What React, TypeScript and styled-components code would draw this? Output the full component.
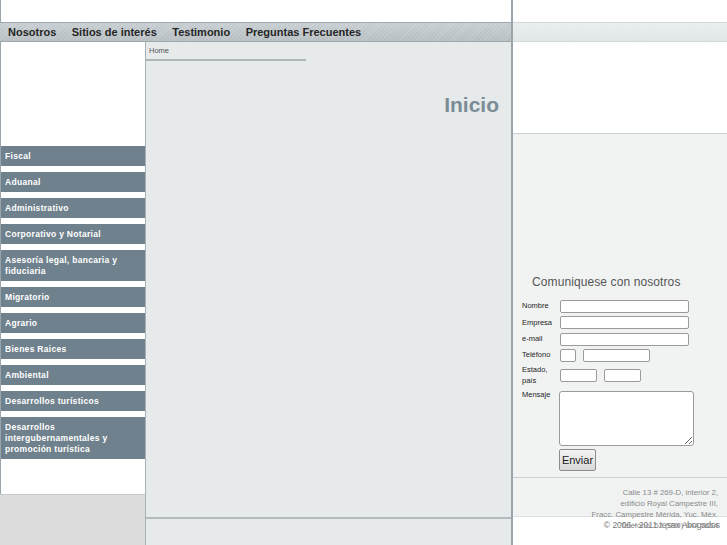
import React, { type FC } from 'react';
import styled, { createGlobalStyle } from 'styled-components';

const COLORS = {
  Line: '#9aa5ab',
  LineSoft: '#c9d1d4',
  Panel: '#e6eaeb',
  PanelLight: '#f1f3f3',
  Menu: '#6f818d',
  Text: '#222',
  Muted: '#8a8a8a',
  Title: '#7b8c96',
};

const GlobalStyle = createGlobalStyle`
  html, body {
    margin: 0;
    padding: 0;
    background: #fff;
  }
  body {
    font-family: "Liberation Sans", Arial, sans-serif;
  }
`;

const Page = styled.div`
  width: 727px;
  height: 545px;
  overflow: hidden;
  display: grid;
  grid-template-columns: 511px 216px;
`;

const Main = styled.div`
  display: grid;
  grid-template-rows: 22px 20px 1fr;
  min-height: 0;
`;

const TopBlank = styled.div`
  border-left: 1px solid ${COLORS.Line};
  background: #fff;
`;

const NavBar = styled.nav<{ $light?: boolean }>`
  box-sizing: border-box;
  height: 20px;
  display: flex;
  align-items: center;
  gap: 15.5px;
  padding-left: 8px;
  border-top: 1px solid ${(p) => (p.$light ? '#d3d9db' : '#9ea8ad')};
  border-bottom: 1px solid ${(p) => (p.$light ? '#d3d9db' : '#9ea8ad')};
  background:
    repeating-linear-gradient(
      135deg,
      rgba(255, 255, 255, 0.14) 0 1px,
      transparent 1px 3px
    ),
    ${(p) =>
      p.$light
        ? 'linear-gradient(#e9edee, #dfe4e6)'
        : 'linear-gradient(#c7ced1, #b6bec2)'};
`;

const NavLink = styled.a`
  font-size: 11px;
  font-weight: bold;
  color: #262626;
  text-decoration: none;
  line-height: 18px;
  white-space: nowrap;
`;

const Body = styled.div`
  display: grid;
  grid-template-columns: 145px 1fr;
  min-height: 0;
`;

const Sidebar = styled.aside`
  display: flex;
  flex-direction: column;
  border-left: 1px solid ${COLORS.Line};
  background: #fff;
`;

const Menu = styled.ul`
  list-style: none;
  margin: 104px 0 0;
  padding: 0;
  display: flex;
  flex-direction: column;
  gap: 6px;
`;

const MenuItem = styled.li`
  background: ${COLORS.Menu};
  color: #fff;
  font-size: 8.5px;
  font-weight: bold;
  letter-spacing: 0.3px;
  line-height: 11px;
  padding: 5px 20px 4px 4px;
`;

const SideFill = styled.div`
  flex: 1;
`;

const SideBottom = styled.div`
  height: 50px;
  background: #dcdcdc;
  border-top: 1px solid #c4cbce;
  margin-left: -1px;
`;

const Content = styled.section`
  display: flex;
  flex-direction: column;
  background: ${COLORS.Panel};
  border-left: 1px solid #a7b1b6;
`;

const Breadcrumb = styled.div`
  width: 157px;
  height: 13px;
  padding: 4px 0 0 3px;
  box-sizing: content-box;
  font-size: 7.5px;
  color: #555;
  border-bottom: 2px solid #adb6bb;
`;

const PageTitle = styled.h1`
  margin: 32px 12px 0 0;
  text-align: right;
  font-size: 21px;
  font-weight: bold;
  color: ${COLORS.Title};
  line-height: 24px;
`;

const Spacer = styled.div`
  flex: 1;
`;

const ContentFooter = styled.div`
  height: 26px;
  border-top: 2px solid #b3bcc0;
`;

const Aside = styled.aside`
  display: flex;
  flex-direction: column;
  border-left: 2px solid ${COLORS.Line};
  min-height: 0;
`;

const AsideTop = styled.div`
  height: 22px;
  background: #fff;
`;

const WhiteBox = styled.div`
  height: 91px;
  background: #fff;
  border-bottom: 1px solid ${COLORS.LineSoft};
`;

const FormArea = styled.div`
  flex: 1;
  background: ${COLORS.PanelLight};
  padding: 141px 0 0 9px;
  border-bottom: 1px solid ${COLORS.LineSoft};
`;

const FormTitle = styled.h2`
  margin: 0 0 11px 10px;
  font-size: 12px;
  font-weight: normal;
  line-height: 14px;
  color: #555;
  letter-spacing: 0.1px;
`;

const FormGrid = styled.form`
  display: grid;
  grid-template-columns: 38px 1fr;
  row-gap: 3.3px;
  align-items: center;
`;

const Label = styled.label<{ $top?: boolean }>`
  font-size: 7.5px;
  line-height: 10.5px;
  color: #1e1e1e;
  align-self: ${(p) => (p.$top ? 'start' : 'center')};
  padding-top: ${(p) => (p.$top ? '1px' : '0')};
`;

const Fields = styled.div`
  display: flex;
  gap: 6.5px;
`;

const Input = styled.input<{ $w: number }>`
  box-sizing: border-box;
  width: ${(p) => p.$w}px;
  height: 13px;
  margin: 0;
  padding: 0 2px;
  border: 1px solid #9a9a9a;
  border-radius: 2px;
  background: #fff;
`;

const TextArea = styled.textarea`
  box-sizing: border-box;
  width: 135px;
  height: 55px;
  margin: 2px 0 0 -1px;
  border: 1px solid #9a9a9a;
  border-radius: 3px;
  background: #fff;
`;

const Button = styled.button`
  grid-column: 2;
  justify-self: start;
  width: 37px;
  height: 22px;
  margin: -1px 0 0 -1px;
  padding: 0;
  font-family: "Liberation Sans", Arial, sans-serif;
  font-size: 11px;
  color: ${COLORS.Text};
  border: 1px solid #8d8d8d;
  border-radius: 2px;
  background: linear-gradient(#f4f4f4, #d8d8d8);
`;

const Address = styled.address`
  height: 38px;
  background: ${COLORS.PanelLight};
  padding: 9px 9px 0 0;
  box-sizing: border-box;
  font-style: normal;
  font-size: 7.8px;
  line-height: 11px;
  text-align: right;
  color: ${COLORS.Muted};
  overflow: visible;
  position: relative;
  z-index: 1;
`;

const Copyright = styled.footer`
  flex: 0 0 26px;
  border-top: 1px solid #dde2e4;
  padding: 2px 7px 0 0;
  font-size: 8.5px;
  line-height: 13px;
  text-align: right;
  color: #777;
`;

const navItems = ['Nosotros', 'Sitios de interés', 'Testimonio', 'Preguntas Frecuentes'];

const menuItems = [
  'Fiscal',
  'Aduanal',
  'Administrativo',
  'Corporativo y Notarial',
  'Asesoría legal, bancaria y fiduciaria',
  'Migratorio',
  'Agrario',
  'Bienes Raices',
  'Ambiental',
  'Desarrollos turísticos',
  'Desarrollos intergubernamentales y promoción turística',
];

const App: FC = () => (
  <>
    <GlobalStyle />
    <Page>
      <Main>
        <TopBlank />
        <NavBar>
          {navItems.map((item) => (
            <NavLink key={item}>{item}</NavLink>
          ))}
        </NavBar>
        <Body>
          <Sidebar>
            <Menu>
              {menuItems.map((item) => (
                <MenuItem key={item}>{item}</MenuItem>
              ))}
            </Menu>
            <SideFill />
            <SideBottom />
          </Sidebar>
          <Content>
            <Breadcrumb>Home</Breadcrumb>
            <PageTitle>Inicio</PageTitle>
            <Spacer />
            <ContentFooter />
          </Content>
        </Body>
      </Main>
      <Aside>
        <AsideTop />
        <NavBar $light />
        <WhiteBox />
        <FormArea>
          <FormTitle>Comuniquese con nosotros</FormTitle>
          <FormGrid>
            <Label>Nombre</Label>
            <Input $w={129} />
            <Label>Empresa</Label>
            <Input $w={129} />
            <Label>e-mail</Label>
            <Input $w={129} />
            <Label>Teléfono</Label>
            <Fields>
              <Input $w={16} />
              <Input $w={67} />
            </Fields>
            <Label>
              Estado,
              <br />
              país
            </Label>
            <Fields>
              <Input $w={37} />
              <Input $w={37} />
            </Fields>
            <Label $top>Mensaje</Label>
            <TextArea />
            <Button type="button">Enviar</Button>
          </FormGrid>
        </FormArea>
        <Address>
          Calle 13 # 269-D, interior 2,
          <br />
          edificio Royal Campestre III,
          <br />
          Fracc. Campestre Mérida, Yuc. Méx.
          <br />
          Teléfono: 52 (999) 944 5654
        </Address>
        <Copyright>© 2006 - 2011 Iesax Abogados</Copyright>
      </Aside>
    </Page>
  </>
);

export default App;
